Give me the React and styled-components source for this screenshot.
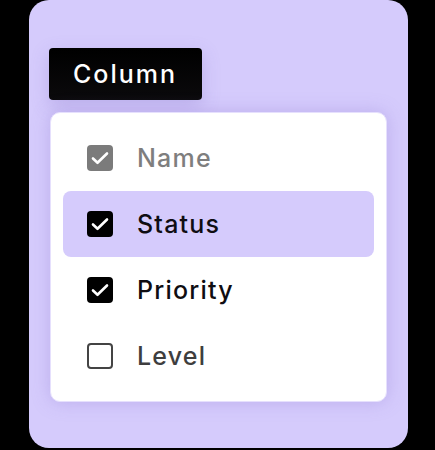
import styled, { createGlobalStyle } from "styled-components";

const GlobalStyle = createGlobalStyle`
  html, body {
    margin: 0;
    padding: 0;
    background: #000;
  }
  body {
    font-family: "Inter", "Noto Sans", sans-serif;
  }
`;

const Stage = styled.div`
  width: 435px;
  height: 450px;
  overflow: hidden;
  background: #000;
`;

const Panel = styled.div`
  box-sizing: border-box;
  margin-left: 29px;
  width: 379px;
  height: 448px;
  background: #d5cbfc;
  border-radius: 20px;
  padding: 48px 0 0 20px;
  display: flex;
  flex-direction: column;
  align-items: flex-start;
  gap: 12px;
`;

const Label = styled.div`
  box-sizing: border-box;
  width: 153px;
  height: 52px;
  padding-left: 24px;
  display: flex;
  align-items: center;
  background: linear-gradient(#000, #0b0a0c);
  color: #fff;
  border-radius: 4px;
  font-size: 25px;
  font-weight: 500;
  letter-spacing: 2px;
  box-shadow: 0 6px 18px rgba(120, 100, 190, 0.25);
`;

const Card = styled.div`
  box-sizing: border-box;
  margin-left: 1px;
  width: 337px;
  padding: 12px;
  background: #fff;
  border: 1px solid #e6e0fd;
  border-radius: 10px;
  box-shadow: 0 0 18px rgba(140, 120, 210, 0.35);
  display: flex;
  flex-direction: column;
`;

const Row = styled.div`
  height: 66px;
  display: flex;
  align-items: center;
  gap: 24px;
  padding-left: 24px;
  border-radius: 8px;
  background: ${p => (p.$active ? "#d5cbfc" : "transparent")};
  color: ${p => p.$color};
  font-size: 25px;
  font-weight: 500;
  letter-spacing: 1.2px;
`;

const Box = styled.span`
  box-sizing: border-box;
  width: 26px;
  height: 26px;
  flex: none;
  border-radius: 4px;
  display: flex;
  align-items: center;
  justify-content: center;
  background: ${p => (p.$checked ? p.$color : "transparent")};
  border: ${p => (p.$checked ? "none" : `2px solid ${p.$color}`)};
`;

const Check = () => (
  <svg width="22" height="22" viewBox="0 0 22 22" fill="none">
    <path d="M4 11.5l4.5 4.3L18 6.5" stroke="#fff" strokeWidth="2.6" strokeLinecap="round" strokeLinejoin="round" />
  </svg>
);

const columns = [
  { name: "Name", checked: true, color: "#7e7e7e", box: "#7b7b7b" },
  { name: "Status", checked: true, color: "#0f0d12", box: "#000", active: true },
  { name: "Priority", checked: true, color: "#0f0d12", box: "#000" },
  { name: "Level", checked: false, color: "#3e3e3e", box: "#444" },
];

export default function App() {
  return (
    <Stage>
      <GlobalStyle />
      <Panel>
        <Label>Column</Label>
        <Card>
          {columns.map(col => (
            <Row key={col.name} $active={col.active} $color={col.color}>
              <Box $checked={col.checked} $color={col.box}>
                {col.checked && <Check />}
              </Box>
              {col.name}
            </Row>
          ))}
        </Card>
      </Panel>
    </Stage>
  );
}
